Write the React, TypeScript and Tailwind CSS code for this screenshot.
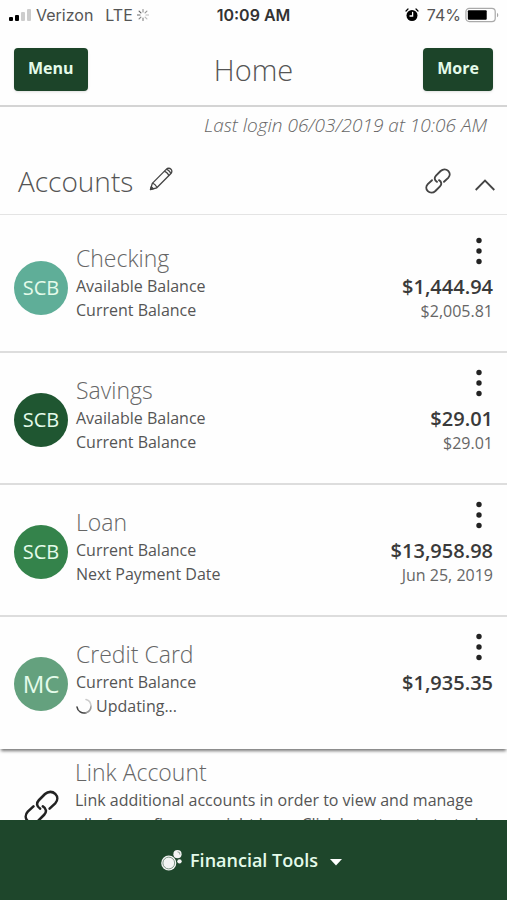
import { ReactNode } from 'react';

interface Account {
  name: string;
  initials: string;
  color: string;
  initialsSize: string;
  labels: ReactNode[];
  amount: string;
  detail?: string;
}

function Spinner() {
  return (
    <svg className="w-4 h-4 shrink-0" viewBox="0 0 16 16" fill="none" strokeWidth="1.6" strokeLinecap="round">
      <path d="M1 9 A7 7 0 0 0 10 14.7" stroke="#444" />
      <path d="M10 14.7 A7 7 0 0 0 15 8" stroke="#999" />
      <path d="M15 8 A7 7 0 0 0 10 1.5" stroke="#ccc" />
    </svg>
  );
}

function LinkIcon({ className }: { className: string }) {
  return (
    <svg className={className} viewBox="0 0 26 26" fill="none" stroke="currentColor" strokeWidth="1.9" strokeLinecap="round">
      <path d="M12 13.8 C9.3 12.3 9 9.6 11 7.6 L15.6 3 C18 0.8 21.2 0.9 23.2 2.9 C25.2 4.9 25.2 7.8 23.2 9.9 L19 13.8" />
      <path d="M14 12.2 C16.7 13.7 17 16.4 15 18.4 L10.4 23 C8 25.2 4.8 25.1 2.8 23.1 C0.8 21.1 0.8 18.2 2.8 16.1 L7 12.2" />
    </svg>
  );
}

const accounts: Account[] = [
  {
    name: 'Checking',
    initials: 'SCB',
    color: 'bg-[#5fae98]',
    initialsSize: 'text-xl',
    labels: ['Available Balance', 'Current Balance'],
    amount: '$1,444.94',
    detail: '$2,005.81',
  },
  {
    name: 'Savings',
    initials: 'SCB',
    color: 'bg-[#1f5631]',
    initialsSize: 'text-xl',
    labels: ['Available Balance', 'Current Balance'],
    amount: '$29.01',
    detail: '$29.01',
  },
  {
    name: 'Loan',
    initials: 'SCB',
    color: 'bg-[#34834b]',
    initialsSize: 'text-xl',
    labels: ['Current Balance', 'Next Payment Date'],
    amount: '$13,958.98',
    detail: 'Jun 25, 2019',
  },
  {
    name: 'Credit Card',
    initials: 'MC',
    color: 'bg-[#64a17e]',
    initialsSize: 'text-2xl',
    labels: [
      'Current Balance',
      <span className="flex items-center gap-1"><Spinner />Updating...</span>,
    ],
    amount: '$1,935.35',
  },
];

function StatusBar() {
  return (
    <div className="grid grid-cols-[1fr_auto_1fr] items-center h-[30px] pl-2 pr-2 font-['Inter',sans-serif] text-base text-[#555]">
      <div className="flex items-center">
        <svg className="w-6 h-4" viewBox="0 0 24 16">
          <rect x="1" y="10" width="4" height="4" rx="1" fill="#000" />
          <rect x="7" y="8" width="4" height="6" rx="1" fill="#000" />
          <rect x="13" y="5" width="4" height="9" rx="1" fill="#ccc" />
          <rect x="19" y="2" width="4" height="12" rx="1" fill="#ccc" />
        </svg>
        <span className="ml-1">Verizon</span>
        <span className="ml-3">LTE</span>
        <svg className="w-3 h-3 ml-1" viewBox="0 0 12 12" strokeWidth="1.2" strokeLinecap="round">
          <path d="M6 0.5V3 M9.9 2.1L8.1 3.9" stroke="#999" />
          <path d="M11.5 6H9 M9.9 9.9L8.1 8.1" stroke="#bbb" />
          <path d="M6 11.5V9 M2.1 9.9L3.9 8.1" stroke="#888" />
          <path d="M0.5 6H3 M2.1 2.1L3.9 3.9" stroke="#666" />
        </svg>
      </div>
      <span className="font-semibold text-[#333]">10:09 AM</span>
      <div className="flex items-center justify-end">
        <svg className="w-[14px] h-[14px] mr-2" viewBox="0 0 14 14" fill="none" strokeLinecap="round">
          <circle cx="7" cy="7.5" r="5.5" fill="#000" />
          <path d="M1 3L3 1 M13 3L11 1" stroke="#000" strokeWidth="1.2" />
          <path d="M7.6 4.5V8H5" stroke="#fff" strokeWidth="1.3" />
        </svg>
        <span className="mr-1">74%</span>
        <svg className="w-[34px] h-4" viewBox="0 0 36 16">
          <rect x="1" y="1" width="31" height="14" rx="3.5" fill="none" stroke="#aaa" strokeWidth="1.3" />
          <rect x="3" y="3" width="20" height="10" rx="1" fill="#000" />
          <path d="M34 5.5 C35.6 6.5 35.6 9.5 34 10.5 Z" fill="#999" />
        </svg>
      </div>
    </div>
  );
}

function AccountRow({ account }: { account: Account }) {
  return (
    <li className="flex items-start gap-2 px-[14px] pt-4 pb-7 border-b-2 border-[#ddd] last:border-b-0">
      <div className={`w-[54px] h-[54px] mt-6 shrink-0 rounded-full flex items-center justify-center text-[#e4fbea] ${account.color} ${account.initialsSize}`}>
        {account.initials}
      </div>
      <div className="flex-1 pt-[5px] text-base leading-6 text-[#555]">
        <h3 className="text-[23px] leading-8 font-light text-[#666]">{account.name}</h3>
        {account.labels.map((label, i) => (
          <div key={i}>{label}</div>
        ))}
      </div>
      <div className="flex flex-col items-end text-right">
        <button type="button" aria-label={`${account.name} options`} className="h-[38px] w-7 flex items-start justify-center text-[#222]">
          <svg className="w-2 h-7" viewBox="0 0 8 28" fill="currentColor">
            <circle cx="4" cy="3.5" r="2.7" />
            <circle cx="4" cy="14" r="2.7" />
            <circle cx="4" cy="24.5" r="2.7" />
          </svg>
        </button>
        <div className="text-xl leading-6 font-semibold text-[#3a3a3a]">{account.amount}</div>
        {account.detail && <div className="text-base leading-6 text-[#666]">{account.detail}</div>}
      </div>
    </li>
  );
}

export default function App() {
  return (
    <div className="h-screen flex flex-col bg-[#fefefe] font-['Open_Sans','Noto_Sans',sans-serif]">
      <StatusBar />
      <header className="grid grid-cols-[1fr_auto_1fr] items-center px-[14px] pt-[18px] pb-[14px] border-b-2 border-[#d4d4d4]">
        <button type="button" className="justify-self-start h-[43px] px-[14px] pb-1 rounded bg-[#1c4429] text-[#e4fbea] text-base font-bold shadow">
          Menu
        </button>
        <h1 className="text-[29px] leading-8 font-light text-[#555]">Home</h1>
        <button type="button" className="justify-self-end h-[43px] px-[14px] pb-1 rounded bg-[#1c4429] text-[#e4fbea] text-base font-bold shadow">
          More
        </button>
      </header>

      <main className="flex-1 min-h-0 overflow-hidden">
        <p className="pt-1 pb-3 pr-5 text-right text-[19px] leading-7 font-light italic text-[#666]">
          Last login 06/03/2019 at 10:06 AM
        </p>

        <section className="shadow-[0_3px_3px_-1px_#777]">
          <div className="flex items-center h-16 pl-[18px] pr-3 pb-1 border-b border-[#e4e4e4] text-[#444]">
            <h2 className="text-[28px] leading-8 font-light text-[#555]">Accounts</h2>
            <button type="button" aria-label="Edit accounts" className="ml-4 pb-1">
              <svg className="w-6 h-6" viewBox="0 0 24 24" fill="none" stroke="currentColor" strokeWidth="1.3" strokeLinejoin="round">
                <path d="M1.5 22.5 L3.3 16.4 L17.2 2.4 C18.8 0.8 20.8 1 22 2.2 C23.2 3.4 23.2 5.3 21.7 6.8 L7.8 20.8 Z" />
                <path d="M3.3 16.4 C5.2 16.4 7.6 18.8 7.8 20.8 M15.2 4.4 C17.2 4.6 19.5 6.9 19.7 8.8 M17.2 2.4 C19.2 2.6 21.5 4.9 21.7 6.8" />
                <path d="M1.5 22.5 L2.3 19.8 L4.3 21.7 Z" fill="currentColor" />
              </svg>
            </button>
            <button type="button" aria-label="Link account" className="ml-auto">
              <LinkIcon className="w-[26px] h-[26px]" />
            </button>
            <button type="button" aria-label="Collapse accounts" className="ml-6">
              <svg className="w-5 h-3 mt-2" viewBox="0 0 20 12" fill="none" stroke="currentColor" strokeWidth="1.8">
                <path d="M0.7 11 L10 1.5 L19.3 11" />
              </svg>
            </button>
          </div>
          <ul className="pt-[6px] pb-[3px]">
            {accounts.map((account) => (
              <AccountRow key={account.name} account={account} />
            ))}
          </ul>
        </section>

        <section className="flex items-start gap-4 pl-6 pr-4 pt-[7px]">
          <LinkIcon className="w-[35px] h-[35px] mt-[34px] shrink-0 text-[#222]" />
          <div className="flex-1 text-base leading-6 text-[#555]">
            <h3 className="text-[23px] leading-8 font-light text-[#666]">Link Account</h3>
            <p>
              Link additional accounts in order to view and manage all of your finances right here. Click here to get
              started.
            </p>
          </div>
        </section>
      </main>

      <footer className="bg-[#1e462b]">
        <button type="button" className="w-full h-20 flex items-center justify-center pr-1 text-lg font-semibold text-[#e4fbea]">
          <svg className="w-[21px] h-[21px] mr-2" viewBox="0 0 20 20">
            <circle cx="7.4" cy="12.4" r="7.2" fill="#f4f4f4" />
            <circle cx="7.4" cy="12.4" r="5.6" fill="none" stroke="#6b8573" strokeWidth="0.8" />
            <circle cx="15.7" cy="4" r="3.9" fill="#f4f4f4" />
            <path d="M15.7 1.7 A2.4 2.4 0 0 1 18 4.4" fill="none" stroke="#6b8573" strokeWidth="0.7" />
            <circle cx="17.6" cy="10.8" r="2.1" fill="#f4f4f4" />
          </svg>
          Financial Tools
          <svg className="w-3 h-2 ml-3 mt-1" viewBox="0 0 12 8">
            <path d="M0 1H12L6 7.5Z" fill="#fff" />
          </svg>
        </button>
      </footer>
    </div>
  );
}
